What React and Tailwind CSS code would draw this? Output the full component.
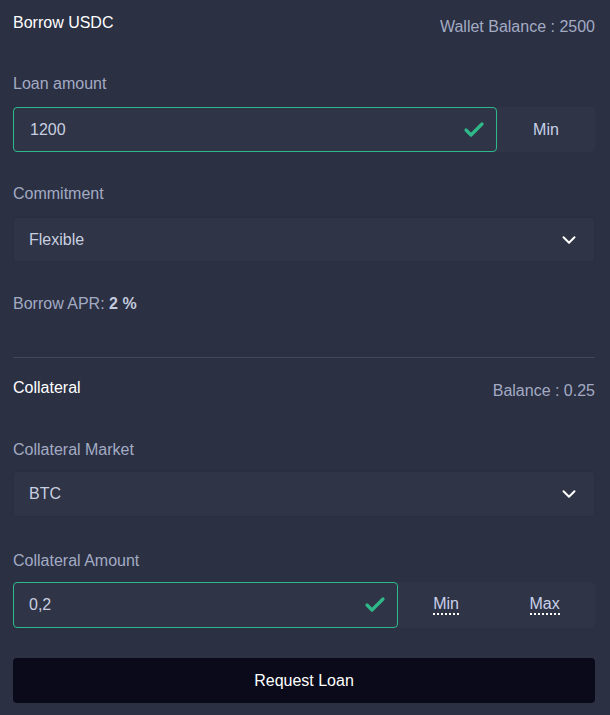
import React from "react";
import { Check, ChevronDown } from "lucide-react";

export default function App() {
  return (
    <div className="min-h-[715px] w-[610px] bg-[#2b3043] pl-[13px] pr-[15px] pt-[12px] font-['Liberation_Sans',Arial,sans-serif] text-[16px] text-[#a3abc3]">
      {/* BORROW */}
      <div className="flex items-start justify-between">
        <h2 className="text-[16px] font-normal leading-[22px] text-white">Borrow USDC</h2>
        <span className="mt-[3px] leading-[24px]">Wallet Balance : 2500</span>
      </div>

      <p className="mt-[34px] leading-[22px]">Loan amount</p>
      <div className="mt-[12px] flex h-[45px] rounded-[4px] bg-[#2f3446]">
        <div className="flex flex-1 items-center rounded-[4px] border border-[#2fb98a] pl-[16px] pr-[10px]">
          <span className="flex-1 text-[#c9cfe0]">1200</span>
          <Check size={24} strokeWidth={3.2} className="text-[#2fb98a]" />
        </div>
        <button className="w-[98px] text-[#c9d1ea]">Min</button>
      </div>

      <p className="mt-[31px] leading-[22px]">Commitment</p>
      <div className="mt-[12px] flex h-[45px] items-center justify-between rounded-[4px] border border-[#2a2f40] bg-[#2f3446] pl-[15px] pr-[14px]">
        <span className="text-[#c9cfe0]">Flexible</span>
        <ChevronDown size={22} strokeWidth={2.2} className="text-white" />
      </div>

      <p className="mt-[31px] leading-[22px]">
        Borrow APR: <b className="text-[#c3cadd]">2 %</b>
      </p>

      <div className="mt-[42px] h-px bg-[#42475a]" />

      {/* COLLATERAL */}
      <div className="mt-[19px] flex items-start justify-between">
        <h2 className="text-[16px] font-normal leading-[22px] text-white">Collateral</h2>
        <span className="mt-[2px] leading-[24px]">Balance : 0.25</span>
      </div>

      <p className="mt-[36px] leading-[22px]">Collateral Market</p>
      <div className="mt-[10px] flex h-[46px] items-center justify-between rounded-[4px] border border-[#2a2f40] bg-[#2f3446] pl-[15px] pr-[14px]">
        <span className="text-[#c9cfe0]">BTC</span>
        <ChevronDown size={22} strokeWidth={2.2} className="text-white" />
      </div>

      <p className="mt-[33px] leading-[22px]">Collateral Amount</p>
      <div className="mt-[10px] flex h-[46px] rounded-[4px] bg-[#2f3446]">
        <div className="flex w-[385px] items-center rounded-[4px] border border-[#2fb98a] pl-[15px] pr-[10px]">
          <span className="flex-1 text-[#c9cfe0]">0,2</span>
          <Check size={24} strokeWidth={3.2} className="text-[#2fb98a]" />
        </div>
        <div className="flex flex-1 items-center justify-around">
          <span className="border-b-2 border-dotted border-white leading-[18px] text-[#c9d1ea]">Min</span>
          <span className="border-b-2 border-dotted border-white leading-[18px] text-[#c9d1ea]">Max</span>
        </div>
      </div>

      <button className="mt-[30px] h-[45px] w-full rounded-[4px] bg-[#0a0a1a] text-white">
        Request Loan
      </button>
    </div>
  );
}
